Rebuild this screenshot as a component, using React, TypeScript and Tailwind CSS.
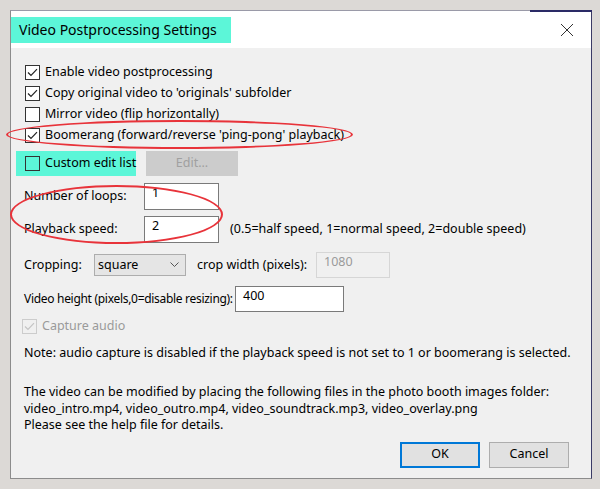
import type { ReactNode } from "react";

const FONT = { fontFamily: '"Noto Sans", "Open Sans", sans-serif' };

function CheckBox({ checked, disabled, label }: { checked?: boolean; disabled?: boolean; label: string }) {
  return (
    <div className="flex h-[21px] items-center gap-[5px] whitespace-nowrap">
      <span
        className={`flex h-[15px] w-[15px] shrink-0 items-center justify-center border ${
          disabled ? "border-[#cccccc] bg-[#f0f0f0]" : "border-[#333333] bg-white"
        }`}
      >
        {checked ? (
          <svg width="13" height="13" viewBox="0 0 13 13">
            <path d="M2 6.5 L5 9.5 L11 3.2" fill="none" stroke={disabled ? "#c4c4c4" : "#222"} strokeWidth="1.2" />
          </svg>
        ) : null}
      </span>
      <span className={disabled ? "text-[#9a9a9a]" : "text-black"}>{label}</span>
    </div>
  );
}

function TextBox({ value, className, disabled }: { value: string; className: string; disabled?: boolean }) {
  return (
    <div
      className={`flex shrink-0 items-start border pl-[7px] pt-[3px] ${
        disabled ? "border-[#d6d6d6] bg-[#f0f0f0] text-[#9a9a9a]" : "border-[#7a7a7a] bg-white text-black"
      } ${className}`}
    >
      {value}
    </div>
  );
}

function Button({ children, primary }: { children: ReactNode; primary?: boolean }) {
  return (
    <div
      className={`flex h-[26px] w-[80px] items-center justify-center bg-[#e1e1e1] ${
        primary ? "border-2 border-[#0078d7]" : "border border-[#adadad]"
      }`}
    >
      {children}
    </div>
  );
}

export default function App() {
  return (
    <div className="h-[489px] w-[600px] bg-[#dcd9d6] pl-[10px] pt-[10px] text-[12.5px] leading-none" style={FONT}>
      <div className="relative flex h-[469px] w-[582px] flex-col border border-[#8c8c8c] border-t-[#9a9aa8] border-r-[#3b3b66]">
        <div className="pointer-events-none absolute right-[-1px] top-[-1px] h-[2px] w-[62px] bg-[#2a2a66]" />
        <div className="flex h-[37px] items-center bg-white pr-[17px]">
          <div className="flex h-[26px] items-center whitespace-nowrap bg-[#5cf6d8] pl-[8px] pr-[14px] text-[14px]">
            Video Postprocessing Settings
          </div>
          <div className="flex-1" />
          <svg width="14" height="14" viewBox="0 0 14 14">
            <path d="M1 1 L13 13 M13 1 L1 13" stroke="#333" strokeWidth="1" />
          </svg>
        </div>

        <div className="relative flex flex-1 flex-col whitespace-nowrap bg-[#f0f0f0] pl-[13px] pt-[14px]">
          <div className="pl-[1px]">
            <CheckBox checked label="Enable video postprocessing" />
            <CheckBox checked label="Copy original video to 'originals' subfolder" />
            <CheckBox label="Mirror video (flip horizontally)" />
            <CheckBox checked label="Boomerang (forward/reverse 'ping-pong' playback)" />
          </div>

          <div className="-ml-[8px] mt-[5px] flex items-center gap-[10px]">
            <div className="flex h-[25px] w-[120px] shrink-0 items-center bg-[#5cf6d8] pl-[9px]">
              <div className="flex items-center gap-[5px]">
                <span className="h-[15px] w-[15px] shrink-0 border border-[#333333]" />
                <span>Custom edit list</span>
              </div>
            </div>
            <div className="flex h-[25px] w-[92px] shrink-0 items-center justify-center bg-[#cccccc] text-[#a0a0a0]">
              Edit...
            </div>
          </div>

          <div className="mt-[7px] flex items-center">
            <span className="w-[120px] shrink-0">Number of loops:</span>
            <TextBox value="1" className="h-[27px] w-[75px]" />
          </div>
          <div className="mt-[6px] flex items-center">
            <span className="w-[120px] shrink-0">Playback speed:</span>
            <TextBox value="2" className="h-[27px] w-[75px]" />
            <span className="ml-[11px]">(0.5=half speed, 1=normal speed, 2=double speed)</span>
          </div>

          <div className="mt-[9px] flex items-center">
            <span className="w-[70px] shrink-0">Cropping:</span>
            <div className="flex h-[22px] w-[92px] shrink-0 items-center justify-between border border-[#adadad] bg-[#e5e5e5] pl-[3px] pr-[6px]">
              <span>square</span>
              <svg width="9" height="6" viewBox="0 0 9 6">
                <path d="M0.5 0.5 L4.5 4.5 L8.5 0.5" fill="none" stroke="#555" strokeWidth="1" />
              </svg>
            </div>
            <span className="ml-[11px] w-[119px] shrink-0">crop width (pixels):</span>
            <TextBox value="1080" className="h-[26px] w-[74px]" disabled />
          </div>

          <div className="mt-[8px] flex items-center">
            <span className="w-[211px] shrink-0 text-[12px] tracking-[-0.3px]">Video height (pixels,0=disable resizing):</span>
            <TextBox value="400" className="h-[26px] w-[109px]" />
          </div>

          <div className="-ml-[2px] mt-[4px]">
            <CheckBox checked disabled label="Capture audio" />
          </div>

          <div className="mt-[7px] leading-[17px]">
            Note: audio capture is disabled if the playback speed is not set to 1 or boomerang is selected.
          </div>

          <div className="mt-[23px] flex flex-col leading-[16.5px]">
            <span>The video can be modified by placing the following files in the photo booth images folder:</span>
            <span>video_intro.mp4, video_outro.mp4, video_soundtrack.mp3, video_overlay.png</span>
            <span>Please see the help file for details.</span>
          </div>

          <div className="mt-[8px] flex justify-end gap-[9px] pr-[22px]">
            <Button primary>OK</Button>
            <Button>Cancel</Button>
          </div>

          <div className="pointer-events-none absolute left-[-5px] top-[72px] h-[29px] w-[347px] rounded-[50%] border-2 border-[#e8333a]" />
          <div className="pointer-events-none absolute left-[-1px] top-[137px] h-[59px] w-[213px] rounded-[50%] border-2 border-[#e8333a]" />
        </div>
      </div>
    </div>
  );
}
